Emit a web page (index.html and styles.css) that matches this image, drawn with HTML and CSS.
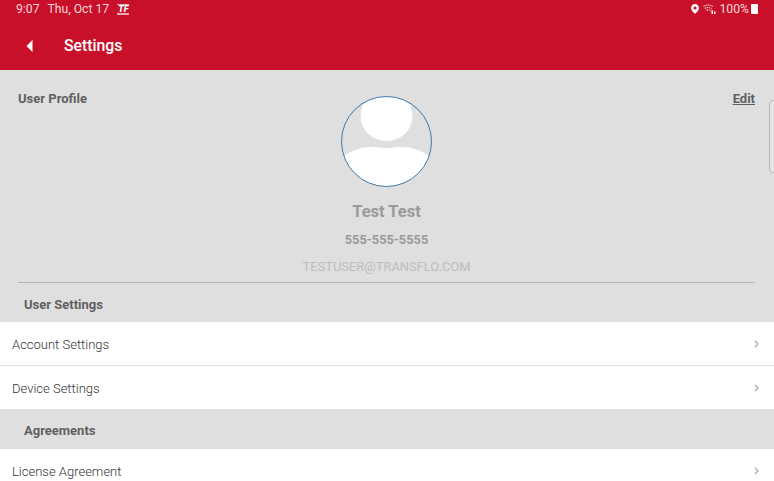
FILE: index.html
```html
<!DOCTYPE html>
<html lang="en">
<head>
    <meta charset="UTF-8">
    <meta name="viewport" content="width=device-width, initial-scale=1.0">
    <title>Settings</title>
    <link rel="stylesheet" href="styles.css">
</head>
<body>
    <header class="app-header">
        <div class="status-bar">
            <div class="status-left">
                <span>9:07</span>
                <span>Thu, Oct 17</span>
                <span class="tf-badge">TF</span>
            </div>
            <div class="status-right">
                <svg class="status-pin" width="8" height="10" viewBox="0 0 9 11">
                    <path fill="#fff" fill-rule="evenodd" d="M4.500 0C2 0 0 2 0 4.400 0 7.400 4.500 11 4.500 11S9 7.400 9 4.400C9 2 7 0 4.500 0zm0 2.800a1.700 1.700 0 1 1 0 3.400 1.700 1.700 0 0 1 0-3.400z"/>
                </svg>
                <svg class="status-wifi" width="13" height="11" viewBox="0 0 13 11">
                    <g fill="none" stroke="#fff" stroke-width="1.100" stroke-dasharray="1.500 .6" opacity=".8">
                        <path d="M.5 2.500C3.500.3 7 .3 10 2.800"/>
                        <path d="M1.800 4.600C4 3 6.800 3 9 5"/>
                        <path d="M3.500 6.600C5 5.500 6.500 5.500 8 7"/>
                    </g>
                    <path fill="#fff" d="M8.500 6.500H10V10H8.500zM11 7.500h1.500V10H11z"/>
                </svg>
                <span class="status-pct">100%</span>
                <span class="battery"></span>
            </div>
        </div>
        <div class="title-bar">
            <svg class="back-icon" width="7" height="12" viewBox="0 0 7 12">
                <path fill="#fff" d="M6.500 0v12L3.500 9 .5 6l3-3z"/>
            </svg>
            <h1>Settings</h1>
        </div>
    </header>

    <main>
        <section class="profile">
            <div class="profile-head">
                <span class="profile-label">User Profile</span>
                <a class="edit-link" href="#">Edit</a>
            </div>
            <div class="avatar">
                <svg width="91" height="91" viewBox="0 0 91 91">
                    <defs>
                        <clipPath id="avatar-clip"><circle cx="45.500" cy="45.500" r="45"/></clipPath>
                    </defs>
                    <g clip-path="url(#avatar-clip)" fill="#fff">
                        <ellipse cx="45.500" cy="20" rx="26" ry="25"/>
                        <path d="M0 62C10 54 22 51 30 51 38 51 40 52 45.500 52 51 52 53 51 61 51 69 51 81 54 91 62V91H0z"/>
                    </g>
                    <circle cx="45.500" cy="45.500" r="45" fill="none" stroke="#3f78a8" stroke-width="1"/>
                </svg>
            </div>
            <div class="profile-name">Test Test</div>
            <div class="profile-phone">555-555-5555</div>
            <div class="profile-email">TESTUSER@TRANSFLO.COM</div>
            <div class="scroll-tab"></div>
        </section>

        <h2 class="group-title group-first">User Settings</h2>
        <a class="row row-line" href="#">
            <span>Account Settings</span>
            <svg class="chev" width="5" height="8" viewBox="0 0 5 8"><path fill="none" stroke="#bdbdbd" stroke-width="1.800" d="M1 .8L3.800 4 1 7.200"/></svg>
        </a>
        <a class="row row-short" href="#">
            <span>Device Settings</span>
            <svg class="chev" width="5" height="8" viewBox="0 0 5 8"><path fill="none" stroke="#bdbdbd" stroke-width="1.800" d="M1 .8L3.800 4 1 7.200"/></svg>
        </a>
        <h2 class="group-title">Agreements</h2>
        <a class="row" href="#">
            <span>License Agreement</span>
            <svg class="chev" width="5" height="8" viewBox="0 0 5 8"><path fill="none" stroke="#bdbdbd" stroke-width="1.800" d="M1 .8L3.800 4 1 7.200"/></svg>
        </a>
    </main>
</body>
</html>
```

FILE: styles.css
```css
* {
    box-sizing: border-box;
    margin: 0;
    padding: 0;
}

html, body {
    height: 481px;
    overflow: hidden;
}

body {
    font-family: Roboto, sans-serif;
    background-color: #dfdfdf;
    color: #5f5f5f;
}

a {
    text-decoration: none;
    color: inherit;
}

.app-header {
    height: 70px;
    background-color: #c8102a;
    color: #fff;
}

.status-bar {
    height: 17px;
    padding: 1px 16px 0 16px;
    display: flex;
    align-items: center;
    justify-content: space-between;
    font-size: 12.200px;
    color: #f6d5da;
}

.status-left {
    display: flex;
    align-items: center;
    gap: 8px;
}

.tf-badge {
    font-size: 9px;
    font-weight: 900;
    font-style: italic;
    line-height: 8px;
    height: 11px;
    padding: 0 1px;
    color: #fff;
    border-top: 1px solid #e9a9b2;
    border-bottom: 2px solid #e9a9b2;
}

.status-right {
    display: flex;
    align-items: center;
}

.status-pin {
    margin-right: 4px;
}

.status-wifi {
    margin-right: 4px;
}

.battery {
    width: 7px;
    height: 10px;
    margin-left: 2px;
    background-color: #fff;
    border-radius: 1px;
}

.title-bar {
    height: 53px;
    padding: 4px 0 0 26px;
    display: flex;
    align-items: center;
    gap: 31px;
}

.title-bar h1 {
    font-size: 15.800px;
    font-weight: 500;
}

.profile {
    position: relative;
    height: 213px;
    margin: 0 19px 0 18px;
    border-bottom: 1px solid #b5b5b5;
    text-align: center;
}

.profile-head {
    display: flex;
    justify-content: space-between;
    padding-top: 21px;
    font-size: 13px;
    line-height: 16px;
    font-weight: 700;
    text-align: left;
}

.edit-link {
    text-decoration: underline;
}

.avatar {
    width: 91px;
    height: 91px;
    margin: -11px auto 0;
}

.avatar svg {
    display: block;
}

.profile-name {
    margin-top: 15px;
    font-size: 16.500px;
    line-height: 20px;
    font-weight: 700;
    color: #9a9a9a;
}

.profile-phone {
    margin-top: 10px;
    font-size: 12.800px;
    line-height: 16px;
    font-weight: 700;
    color: #9a9a9a;
}

.profile-email {
    margin-top: 11px;
    font-size: 12.900px;
    line-height: 16px;
    color: #bdbdbd;
}

/* handle sticking out on the right edge */
.scroll-tab {
    position: absolute;
    top: 30px;
    left: 751px;
    width: 12px;
    height: 73px;
    border: 1px solid #b9b9b9;
    border-radius: 4px;
    background-color: #e4e4e4;
}

.group-title {
    height: 40px;
    padding: 14px 0 0 24px;
    font-size: 13px;
    line-height: 16px;
    font-weight: 700;
}

.group-first {
    height: 39px;
}

.row {
    height: 44px;
    padding: 0 15px 0 12px;
    display: flex;
    align-items: center;
    justify-content: space-between;
    background-color: #fff;
    font-size: 13px;
    font-weight: 300;
    color: #333;
}

.row-line {
    padding-top: 1px;
    border-bottom: 1px solid #e0e0e0;
}

.row-short {
    height: 43px;
    padding-top: 1px;
}
```
